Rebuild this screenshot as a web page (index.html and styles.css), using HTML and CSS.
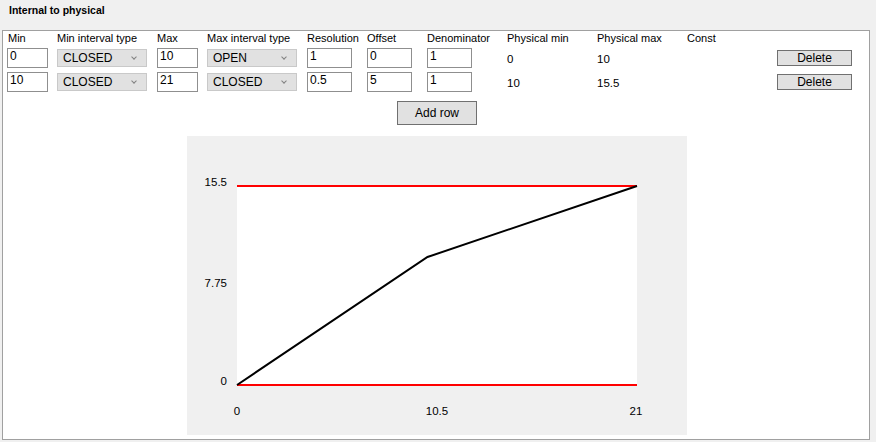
FILE: index.html
```html
<!DOCTYPE html>
<html>
<head>
<meta charset="utf-8">
<link rel="stylesheet" href="styles.css">
</head>
<body>
<div class="title">Internal to physical</div>
<div class="panel">
  <div class="row head">
    <div class="c c1">Min</div>
    <div class="c c2">Min interval type</div>
    <div class="c c3">Max</div>
    <div class="c c4">Max interval type</div>
    <div class="c c5">Resolution</div>
    <div class="c c6">Offset</div>
    <div class="c c7">Denominator</div>
    <div class="c c8">Physical min</div>
    <div class="c c9">Physical max</div>
    <div class="c c10">Const</div>
  </div>
  <div class="row data">
    <div class="c c1"><div class="tb">0</div></div>
    <div class="c c2"><div class="sel"><span>CLOSED</span><i class="chev"></i></div></div>
    <div class="c c3"><div class="tb">10</div></div>
    <div class="c c4"><div class="sel"><span>OPEN</span><i class="chev"></i></div></div>
    <div class="c c5"><div class="tb wide">1</div></div>
    <div class="c c6"><div class="tb wide">0</div></div>
    <div class="c c7"><div class="tb wide">1</div></div>
    <div class="c c8 val">0</div>
    <div class="c c9 val">10</div>
    <div class="c c10"></div>
    <div class="c c11"><div class="btn del">Delete</div></div>
  </div>
  <div class="row data">
    <div class="c c1"><div class="tb">10</div></div>
    <div class="c c2"><div class="sel"><span>CLOSED</span><i class="chev"></i></div></div>
    <div class="c c3"><div class="tb">21</div></div>
    <div class="c c4"><div class="sel"><span>CLOSED</span><i class="chev"></i></div></div>
    <div class="c c5"><div class="tb wide">0.5</div></div>
    <div class="c c6"><div class="tb wide">5</div></div>
    <div class="c c7"><div class="tb wide">1</div></div>
    <div class="c c8 val">10</div>
    <div class="c c9 val">15.5</div>
    <div class="c c10"></div>
    <div class="c c11"><div class="btn del">Delete</div></div>
  </div>
  <div class="addwrap"><div class="btn add">Add row</div></div>
  <div class="chartwrap">
    <svg class="chart" width="500" height="299" viewBox="0 0 500 299">
      <rect x="0" y="0" width="500" height="299" fill="#f0f0f0"/>
      <rect x="50" y="50" width="400" height="199" fill="#ffffff"/>
      <line x1="50" y1="50" x2="450" y2="50" stroke="#ff0000" stroke-width="2"/>
      <line x1="50" y1="249" x2="450" y2="249" stroke="#ff0000" stroke-width="2"/>
      <polyline points="50,249 240.5,121 450,50" fill="none" stroke="#000" stroke-width="2"/>
      <g class="lbl">
        <text x="40" y="46" text-anchor="end">15.5</text>
        <text x="40" y="147" text-anchor="end">7.75</text>
        <text x="40" y="245" text-anchor="end">0</text>
        <text x="50" y="275" text-anchor="middle">0</text>
        <text x="250" y="275" text-anchor="middle">10.5</text>
        <text x="449" y="275" text-anchor="middle">21</text>
      </g>
    </svg>
  </div>
</div>
</body>
</html>
```
FILE: styles.css
```css
html, body {
  margin: 0;
  padding: 0;
  background: #f0f0f0;
  font-family: "Liberation Sans", Arial, sans-serif;
  font-size: 11px;
  color: #000;
}
.title {
  height: 30px;
  box-sizing: border-box;
  padding: 3px 0 0 9px;
  font-weight: bold;
  font-size: 10.5px;
  line-height: 14px;
}
.panel {
  box-sizing: border-box;
  width: 868px;
  height: 410px;
  margin-left: 2px;
  border: 1px solid #a0a0a0;
  background: #ffffff;
  padding-left: 4px;
}
.row {
  display: flex;
}
.head {
  height: 17px;
  line-height: 14px;
}
.head .c1 {
  padding-left: 1px;
  box-sizing: border-box;
}
.data {
  height: 24px;
  align-items: flex-start;
}
.c { flex: none; }
.c1 { width: 50px; }
.c2 { width: 100px; }
.c3 { width: 50px; }
.c4 { width: 100px; }
.c5 { width: 60px; }
.c6 { width: 60px; }
.c7 { width: 80px; }
.c8 { width: 90px; }
.c9 { width: 90px; }
.c10 { width: 90px; }
.c11 { width: 76px; }
.tb {
  box-sizing: border-box;
  width: 41px;
  height: 20px;
  border: 1px solid #8f8f8f;
  background: #fff;
  padding: 0 2px;
  font-size: 12px;
  line-height: 15px;
}
.tb.wide { width: 45px; }
.sel {
  box-sizing: border-box;
  width: 90px;
  height: 18px;
  margin-top: 1px;
  border: 1px solid #c9c9c9;
  background: #e1e1e1;
  display: flex;
  align-items: center;
  justify-content: space-between;
  padding: 0 10px 0 5px;
  font-size: 12px;
}
.chev {
  width: 3px;
  height: 3px;
  border-right: 1px solid #808080;
  border-bottom: 1px solid #808080;
  transform: rotate(45deg);
  margin-top: -2px;
}
.val {
  padding-top: 4px;
  line-height: 14px;
  font-size: 11.5px;
}
.btn {
  box-sizing: border-box;
  background: #e1e1e1;
  border: 1px solid #707070;
  text-align: center;
  font-size: 12px;
}
.del {
  width: 75px;
  height: 16px;
  margin-top: 2px;
  line-height: 14px;
}
.addwrap {
  display: flex;
  justify-content: center;
  margin-top: 5px;
  padding-right: 4px;
}
.add {
  width: 80px;
  height: 24px;
  line-height: 22px;
  margin-left: 2px;
}
.chartwrap {
  display: flex;
  justify-content: center;
  margin-top: 11px;
  padding-right: 4px;
}
.chart {
  display: block;
  margin-left: 2px;
}
.lbl text {
  font-family: "Liberation Sans", Arial, sans-serif;
  font-size: 11.5px;
  fill: #000;
  dominant-baseline: central;
}
```
